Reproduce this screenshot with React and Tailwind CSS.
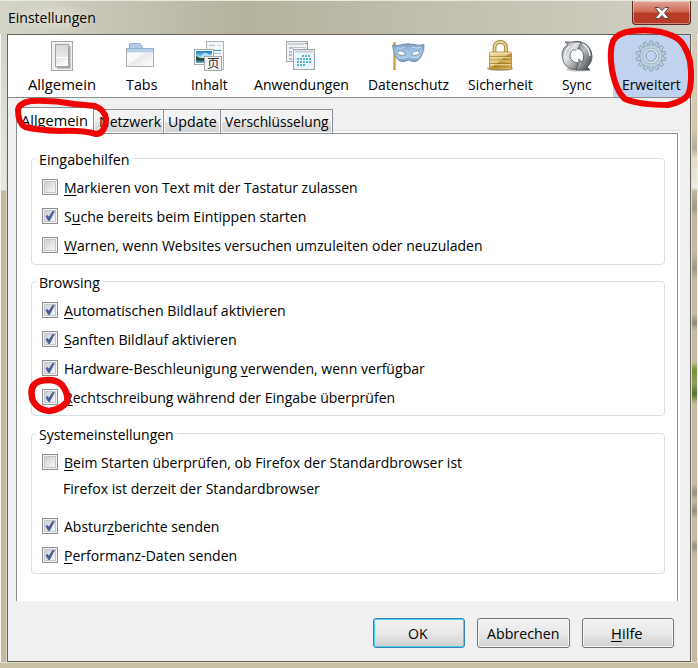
import React, { useLayoutEffect, useRef, useState } from "react";

// A line of text condensed or widened to exactly w pixels.
function Fit({ w, children }) {
  const ref = useRef(null);
  const [scale, setScale] = useState(1);
  useLayoutEffect(() => {
    setScale(w / ref.current.offsetWidth);
  }, [w]);
  return (
    <span className="inline-block shrink-0 whitespace-nowrap text-left" style={{ width: w }}>
      <span ref={ref} className="inline-block origin-left" style={{ transform: `scaleX(${scale})` }}>
        {children}
      </span>
    </span>
  );
}

function U({ children }) {
  return <span className="underline decoration-1 underline-offset-2">{children}</span>;
}

function Check({ on }) {
  return (
    <span className="block size-4 shrink-0 border border-[#8e8f8f] bg-[#f4f4f4] p-px">
      <span className="block size-3 border border-[#c3c7cd] bg-linear-to-br from-[#cbcfd5] to-[#f6f6f6]">
        {on && (
          <svg viewBox="0 0 10 10" className="size-[10px]">
            <path d="M1 5.200 2.400 4.400 4 6.200 7.600.4 9.300.2 4.600 9.500 3.300 9.500Z" fill="#465b98" stroke="#465b98" strokeWidth=".8" />
          </svg>
        )}
      </span>
    </span>
  );
}

function Row({ on, w, children }) {
  return (
    <div className="flex h-[29px] items-center gap-[6px]">
      <Check on={on} />
      <Fit w={w}>{children}</Fit>
    </div>
  );
}

function Group({ title, tw, className, children }) {
  return (
    <section className={"flex flex-col rounded-[4px] border border-[#d5dfe5] pl-[10px] " + className}>
      <div className="-mt-[11px] -ml-[6px] flex h-[22px] w-fit items-center bg-white px-[3px]">
        <Fit w={tw}>{title}</Fit>
      </div>
      {children}
    </section>
  );
}

function SwitchIcon() {
  return (
    <svg width="32" height="32" viewBox="0 0 32 32">
      <defs>
        <linearGradient id="sw" x1="0" y1="0" x2="1" y2="1"><stop offset="0" stopColor="#e4e4e4" /><stop offset="1" stopColor="#fff" /></linearGradient>
        <linearGradient id="sw2" x1="0" y1="0" x2="0" y2="1"><stop offset="0" stopColor="#d6d6d6" /><stop offset="1" stopColor="#f6f6f6" /></linearGradient>
      </defs>
      <rect x="5.500" y="1.500" width="21" height="29" fill="#f0f0f0" stroke="#a6a6a6" />
      <path d="M11 27.500h12.500V6" fill="none" stroke="#777" strokeWidth="2" opacity=".6" />
      <rect x="9.500" y="4.500" width="13" height="22" fill="url(#sw2)" stroke="#a2a2a2" />
      <path d="M10 18h12v8H10z" fill="url(#sw)" /><path d="M10 17.500h12M10 25.500h12" stroke="#fff" />
    </svg>
  );
}

function FolderIcon() {
  return (
    <svg width="32" height="32" viewBox="0 0 32 32">
      <defs><linearGradient id="fo" x1="0" y1="0" x2="1" y2="1"><stop offset="0" stopColor="#fff" /><stop offset=".48" stopColor="#f6f6f6" /><stop offset=".5" stopColor="#e8e8e8" /><stop offset="1" stopColor="#fff" /></linearGradient></defs>
      <path d="M4.500 9V4.500q0-1 1-1h9q1 0 1 1l2 2V9z" fill="#b3cbe5" stroke="#8fadcc" />
      <rect x="1.500" y="8.500" width="27" height="18" fill="url(#fo)" stroke="#adadad" />
      <path d="M2 9h26v3H2z" fill="#b8cfe7" />
      <path d="M1 8.500h28" stroke="#93b0cf" />
      <path d="M2 12.500h26" stroke="#dde9f4" />
    </svg>
  );
}

function ContentIcon() {
  return (
    <svg width="32" height="32" viewBox="0 0 32 32">
      <defs><linearGradient id="ph" x1="0" y1="0" x2="0" y2="1"><stop offset="0" stopColor="#1478c8" /><stop offset=".55" stopColor="#b2e3f2" /><stop offset=".6" stopColor="#2d5740" /><stop offset=".8" stopColor="#386a84" /><stop offset="1" stopColor="#72b6d2" /></linearGradient></defs>
      <rect x="13.500" y="1.500" width="17" height="28" fill="#f3f5f7" stroke="#aab0b5" />
      <path d="M16 5.500h6M16 13.500h12M19 16.500h9" stroke="#b5c2cc" /><path d="M16 10.500h12" stroke="#3c9ab0" /><path d="M24 5.500h4" stroke="#d0d8de" />
      <rect x="1.500" y="9.500" width="19" height="15" fill="#fff" stroke="#a6a9ac" />
      <rect x="3" y="11" width="16" height="12" fill="url(#ph)" />
      <path d="M3 16 8 18.500 13 19v2L3 20z" fill="#23513b" /><path d="M9 15q3-4 6-1t4-1v4H9z" fill="#d3f0f6" opacity=".7" />
      <rect x="11.500" y="16.500" width="17" height="14" fill="#f2f2f2" stroke="#a5a5a5" />
      <text x="14" y="28.300" fontSize="12.500" fontFamily="Noto Sans CJK SC, sans-serif" fill="#333">页</text>
    </svg>
  );
}

function AppsIcon() {
  return (
    <svg width="32" height="32" viewBox="0 0 32 32">
      <rect x="1.500" y="1.500" width="21" height="20" fill="#f1f3f5" stroke="#9fa5aa" />
      <path d="M3 4h16" stroke="#cbd0d4" strokeWidth="2" /><path d="M20 3.500h2" stroke="#6e86ad" />
      <path d="M4 8h4M4 12h3M4 15h3M4 19h3" stroke="#9aabc0" strokeWidth="1.600" />
      <path d="M7 7.500h14" stroke="#bcc3ca" />
      <rect x="8.500" y="9.500" width="21" height="20" fill="#eef5f9" stroke="#9fa5aa" />
      <path d="M10 11.500h18" stroke="#c8cdd1" strokeWidth="2" />
      <path d="M17 16h9M12 19h14M12 22h14M12 25h8" stroke="#58b4d8" strokeWidth="2" strokeDasharray="2 1" />
    </svg>
  );
}

function MaskIcon() {
  return (
    <svg width="36" height="32" viewBox="0 0 36 32">
      <defs><linearGradient id="mk" x1="0" y1="0" x2="0" y2="1"><stop offset="0" stopColor="#7f9fbd" /><stop offset=".4" stopColor="#9cc0e6" /><stop offset=".7" stopColor="#a5c8ea" /><stop offset="1" stopColor="#7599bc" /></linearGradient></defs>
      <path d="M4.500 2v28" stroke="#b98a20" strokeWidth="2.200" /><path d="M4 2v27" stroke="#f0d070" strokeWidth=".8" />
      <path d="M2.500 5Q8 6.500 12 4.500Q18 3 24 4.500Q29 6 34 4.500Q34.500 11 31.500 16Q28 22.500 22.500 21.500L18.500 20L14.500 21.500Q9 22.500 6 17Q3 12 2.500 5Z" fill="url(#mk)" stroke="#6f8aa5" strokeWidth=".9" />
      <path d="M7 8Q12 9 15 7M22 7Q26 9 31 7M9 18Q14 19.500 17 16.500M20 16.500Q24 19.500 29 16.500" fill="none" stroke="#c3dcf2" />
      <path d="M6.500 13Q9 9.500 13 11.500Q15.500 12.500 15.500 15Q11 17 6.500 13ZM30.500 13Q28 9.500 24 11.500Q21.500 12.500 21.500 15Q26 17 30.500 13Z" fill="#fff" stroke="#6684a4" strokeWidth=".8" />
    </svg>
  );
}

function LockIcon() {
  return (
    <svg width="32" height="32" viewBox="0 0 32 32">
      <defs><linearGradient id="lk" x1="0" y1="0" x2="1" y2="1"><stop offset="0" stopColor="#f1dda0" /><stop offset=".48" stopColor="#dfc477" /><stop offset=".5" stopColor="#b98f30" /><stop offset="1" stopColor="#dfc16b" /></linearGradient></defs>
      <ellipse cx="16" cy="28.500" rx="13" ry="2.500" fill="#777" opacity=".6" />
      <path d="M10.500 13V8Q10.500 2 16.300 2T22 8V13" fill="none" stroke="#a58840" strokeWidth="3.800" />
      <path d="M10.500 13V8Q10.500 2 16.300 2T22 8V13" fill="none" stroke="#e7d59a" strokeWidth="1.800" />
      <rect x="5.500" y="12" width="22" height="17.500" rx="1.500" fill="url(#lk)" stroke="#a98437" strokeWidth=".8" />
      <path d="M6 16.500h21M6 20h21M6 23.500h21M6 27h21" stroke="#9f7523" strokeWidth=".7" />
      <path d="M6 17.500h21M6 21h21M6 24.500h21" stroke="#f3e2a8" strokeWidth=".7" /><path d="M6 13.200h21" stroke="#f8eac0" />
    </svg>
  );
}

function SyncIcon() {
  return (
    <svg width="32" height="32" viewBox="0 0 32 32">
      <defs>
        <linearGradient id="sy" x1="0" y1="0" x2="1" y2="1"><stop offset="0" stopColor="#777b80" /><stop offset=".4" stopColor="#e1e5e8" /><stop offset=".75" stopColor="#9a9ea2" /><stop offset="1" stopColor="#44484d" /></linearGradient>
        <linearGradient id="sz" x1="0" y1="0" x2="1" y2="1"><stop offset="0" stopColor="#6f7377" /><stop offset=".45" stopColor="#b9bdc1" /><stop offset="1" stopColor="#2c3035" /></linearGradient>
      </defs>
      <ellipse cx="17" cy="29.500" rx="12" ry="2" fill="#777" opacity=".4" />
      <path d="M12 2Q18 0 25 4Q31 9 31 16Q31 23 26 27L29 30H15L18 19L21 22.500Q25 15 20 10Q18 8 16 8Z" fill="url(#sz)" stroke="#44484c" strokeWidth=".8" />
      <path d="M4 2H20L16 12L13.500 9.500Q9 11 9 16Q9 21 17 23L15.500 29.500Q7 30 3 23Q-1 14 3 8L7 4.500Z" fill="url(#sy)" stroke="#505459" strokeWidth=".8" />
      <ellipse cx="15.800" cy="15.800" rx="5" ry="6.300" fill="#fff" />
      <path d="M16 8.500 14.500 12 13 10Z" fill="#b9bdc1" /><path d="m17.500 18 3 3-3.500 2.500Z" fill="#85898e" />
      <path d="M4 18Q3 10 9 6M22 4Q28 8 29 16" fill="none" stroke="#eef1f3" strokeWidth="1.300" />
    </svg>
  );
}

function GearIcon() {
  const teeth = Array.from({ length: 14 }, (_, i) => (i * 360) / 14);
  return (
    <svg width="32" height="32" viewBox="0 0 32 32">
      <g fill="#b9d0df" stroke="#7f9db3" strokeWidth=".8">
        {teeth.map((a) => <path key={a} d="M13.600 6 14.800 1h2.400L18.400 6Z" transform={`rotate(${a} 16 16)`} />)}
        <circle cx="16" cy="16" r="11" />
      </g>
      <circle cx="16" cy="16" r="10.800" fill="#b9d0df" />
      <circle cx="16" cy="16" r="7.800" fill="#cbdce8" stroke="#94adbd" strokeWidth=".8" />
      <circle cx="16" cy="16" r="6.600" fill="none" stroke="#dfebf1" />
      <circle cx="16" cy="16" r="5.300" fill="#c1d2ee" stroke="#7f9db1" />
    </svg>
  );
}

function Tool({ icon, label, w, className }) {
  return (
    <div className={"flex shrink-0 flex-col items-center pt-1 " + className}>
      <div className="mt-px flex h-8 items-center">{icon}</div>
      <div className="mt-px flex h-[22px] items-center"><Fit w={w}>{label}</Fit></div>
    </div>
  );
}

function Tab({ label, w, className }) {
  return (
    <div className={"flex h-6 items-center justify-center border border-b-0 border-[#898c95] bg-linear-to-b from-[#f2f2f2] from-50% via-[#e2e2e2] via-50% to-[#d2d2d2] pb-[2px] shadow-[inset_0_0_0_1px_#f8f8f8] " + className}>
      <Fit w={w}>{label}</Fit>
    </div>
  );
}

function Button({ w, primary, className, children }) {
  return (
    <button className={"flex h-[30px] items-center justify-center rounded-[3px] border bg-linear-to-b from-[#f2f2f2] from-0% via-[#e9e9e9] via-49% to-[#cfcfcf] pr-[2px] " + (primary ? "border-[#3c7fb1] shadow-[inset_0_0_0_1px_#48d0f5] " : "border-[#707070] shadow-[inset_0_0_0_1px_#f9f9f9] ") + className}>
      <Fit w={w}>{children}</Fit>
    </button>
  );
}

export default function App() {
  return (
    <div className="relative flex h-[668px] w-[698px] flex-col overflow-hidden bg-[#c9bfa2] font-['Open_Sans','Noto_Sans',sans-serif] text-[14.800px] leading-[20px] text-black">
      {/* window chrome */}
      <header className="flex h-[34px] shrink-0 items-start justify-between border-t border-[#e9e8df] bg-linear-to-r from-[#d4d4c9] from-0% via-[#b5b29d] via-35% to-[#d1d1c4] pr-[7px] pl-2">
        <div className="flex h-[33px] items-center bg-radial from-[#deddd4] to-transparent to-70% pb-px"><Fit w={88}>Einstellungen</Fit></div>
        <div className="flex h-6 w-[59px] items-center justify-center rounded-b-[4px] border border-t-0 border-[#592b26] bg-linear-to-b from-[#dfa597] from-0% via-[#cd6754] via-48% to-[#b93a25] to-52% shadow-[inset_0_0_0_1px_#ffffff66]">
          <svg width="18" height="14" viewBox="0 0 18 14">
            <path d="M2 1.500h4L9 4.500l3-3h4L11.500 7l4.500 5.500h-4L9 9.500l-3 3H2L6.500 7Z" fill="#fff" stroke="#5d4845" strokeWidth="1" />
          </svg>
        </div>
      </header>
      <div className="flex h-[628px] shrink-0">
        <div className="h-full w-[7px] shrink-0 border-r border-l border-r-[#dedacb] border-l-[#f7f7f5] bg-linear-to-b from-[#d3d2c8] from-0% via-[#e7e8e2] via-[156px] to-[#c4bb9e] to-[157px]" />
        <div className="flex h-full w-[684px] shrink-0 flex-col border border-[#65615a] bg-[#f0f0f0]">
          <nav className="flex h-[63px] shrink-0 border-b border-[#8c8c8c] bg-white">
            <Tool className="ml-[10px] w-[88px]" icon={<SwitchIcon />} label="Allgemein" w={68} />
            <Tool className="ml-[9px] w-[52px]" icon={<FolderIcon />} label="Tabs" w={31} />
            <Tool className="ml-[11px] w-[62px]" icon={<ContentIcon />} label="Inhalt" w={37} />
            <Tool className="ml-[9px] w-[104px]" icon={<AppsIcon />} label="Anwendungen" w={95} />
            <Tool className="ml-[5px] w-[100px]" icon={<MaskIcon />} label="Datenschutz" w={81} />
            <Tool className="w-[84px]" icon={<LockIcon />} label="Sicherheit" w={65} />
            <Tool className="ml-[4px] w-[62px]" icon={<SyncIcon />} label="Sync" w={30} />
            <Tool className="ml-[5px] w-[77px] bg-[#c1d2ee] pr-px" icon={<GearIcon />} label="Erweitert" w={59} />
          </nav>
          <div className="ml-2 flex h-[35px] shrink-0 items-end">
            <div className="z-10 -mb-px flex h-[27px] w-[78px] items-center justify-center border border-b-0 border-[#898c95] bg-white pr-px pb-[3px]"><Fit w={67}>Allgemein</Fit></div>
            <Tab className="w-[70px] justify-end border-l-0 pr-[2px]" label="Netzwerk" w={62} />
            <Tab className="w-[57px] border-l-0" label="Update" w={49} />
            <Tab className="w-[112px] border-l-0" label="Verschlüsselung" w={104} />
            <div className="mr-[10px] h-[3px] flex-1 border-t border-[#dedede] bg-[#fafafa]" />
          </div>
          <main className="mr-[12px] ml-2 flex h-[468px] shrink-0 flex-col border border-b-0 border-[#898c95] bg-white pt-[24px] pr-3 pl-[14px] shadow-[2px_0_0_#fff]">
            <Group title="Eingabehilfen" tw={91} className="h-[107px]">
              <div className="mt-[2px]">
                <Row w={294}><U>M</U>arkieren von Text mit der Tastatur zulassen</Row>
                <Row on w={242}>S<U>u</U>che bereits beim Eintippen starten</Row>
                <Row w={418}><U>W</U>arnen, wenn Websites versuchen umzuleiten oder neuzuladen</Row>
              </div>
            </Group>
            <Group title="Browsing" tw={61} className="mt-4 h-[135px]">
              <div className="mt-[2px]">
                <Row on w={222}><U>A</U>utomatischen Bildlauf aktivieren</Row>
                <Row on w={173}><U>S</U>anften Bildlauf aktivieren</Row>
                <Row on w={361}>Hardware-Beschleunigung <U>v</U>erwenden, wenn verfügbar</Row>
                <Row on w={331}><U>R</U>echtschreibung während der Eingabe überprüfen</Row>
              </div>
            </Group>
            <Group title="Systemeinstellungen" tw={135} className="mt-[17px] h-[141px]">
              <div className="mt-[2px]">
                <Row w={398}><U>B</U>eim Starten überprüfen, ob Firefox der Standardbrowser ist</Row>
                <div className="ml-[21px] flex h-[24px] items-center"><Fit w={257}>Firefox ist derzeit der Standardbrowser</Fit></div>
                <div className="mt-[11px]">
                  <Row on w={155}>Abstur<U>z</U>berichte senden</Row>
                  <Row on w={173}><U>P</U>erformanz-Daten senden</Row>
                </div>
              </div>
            </Group>
          </main>
          <footer className="mt-[17px] mr-4 flex justify-end gap-3">
            <Button primary w={20} className="w-[92px]">OK</Button>
            <Button w={72} className="w-[93px]">Abbrechen</Button>
            <Button w={32} className="w-[92px]"><U>H</U>ilfe</Button>
          </footer>
        </div>
        <div className="h-full w-[7px] shrink-0 border-r border-l border-r-[#f4f2ec] border-l-[#e3e0d4] bg-[linear-gradient(to_bottom,#d2cebd_0px,#d5c9a9_94px,#b5ad98_114px,#e2d9bd_124px,#ecebe4_154px,#bfb69c_157px,#a29a84_174px,#c0b79a_182px,#c4bb9e_218px,#9f9780_234px,#c4bb9e_246px,#c4bb9e_280px,#8f8871_289px,#c4bb9e_296px,#c4bb9e_328px,#769437_336px,#8c9b60_350px,#527527_360px,#c4bb9e_370px,#c4bb9e_450px,#978f79_459px,#c4bb9e_466px,#978f79_477px,#c4bb9e_485px,#c4bb9e_505px,#978f79_513px,#c4bb9e_520px)]" />
      </div>
      <div className="min-h-0 flex-1 border-t border-[#dedacb]" />

      {/* hand-drawn red highlights over the window */}
      <svg className="pointer-events-none absolute inset-0 z-20" width="698" height="668" viewBox="0 0 698 668" fill="none" stroke="#ee0404" strokeLinejoin="round" strokeLinecap="round">
        <path d="M31 101Q52 100 74 104L95 106Q105 110 106 119Q105 134 96 134Q82 130 60 131Q37 130 25 127Q18 123 18 110Q19 103 31 101Z" strokeWidth="6" />
        <path d="M632 31Q617 33 613 41Q609 51 612 70Q616 91 625 99Q640 105 668 105Q682 102 688 95Q693 83 690 61Q685 42 675 37Q657 28 632 31Z" strokeWidth="6" />
        <path d="M40 381Q55 378 62 385Q69 394 67 402Q60 410 49 411Q38 410 33 401Q28 385 40 381Z" strokeWidth="6.500" />
      </svg>
    </div>
  );
}
